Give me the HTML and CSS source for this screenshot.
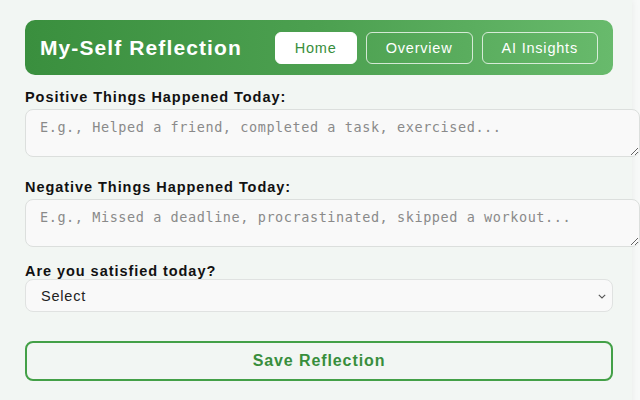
FILE: index.html
```html
<!DOCTYPE html>
<html>
<head>
<meta charset="utf-8">
<link rel="stylesheet" href="styles.css">
</head>
<body>
<div class="app">
  <header class="header">
    <h1 class="title">My-Self Reflection</h1>
    <nav class="nav">
      <button class="nav-btn active">Home</button>
      <button class="nav-btn">Overview</button>
      <button class="nav-btn">AI Insights</button>
    </nav>
  </header>
  <form class="form">
    <label class="label">Positive Things Happened Today:</label>
    <textarea class="area" placeholder="E.g., Helped a friend, completed a task, exercised..."></textarea>
    <label class="label label-gap">Negative Things Happened Today:</label>
    <textarea class="area" placeholder="E.g., Missed a deadline, procrastinated, skipped a workout..."></textarea>
    <label class="label label-gap2">Are you satisfied today?</label>
    <div class="select">
      <span>Select</span>
      <svg class="chev" width="8" height="5" viewBox="0 0 8 5"><path d="M0.8 0.8 L4 4 L7.2 0.8" fill="none" stroke="#555" stroke-width="1.1"/></svg>
    </div>
    <button type="button" class="save">Save Reflection</button>
  </form>
</div>
</body>
</html>
```
FILE: styles.css
```css
* { box-sizing: border-box; }
html, body { margin: 0; padding: 0; }
body {
  background: #f7f9f8;
  font-family: "Liberation Sans", Arial, sans-serif;
  width: 640px;
  height: 400px;
  overflow: hidden;
}
.app {
  width: 632px;
  min-height: 420px;
  background: #f2f6f3;
  border-radius: 0 0 14px 0;
  box-shadow: 1px 0 6px rgba(0,0,0,0.05);
  padding: 20px 19px 0 25px;
}
.header {
  height: 55px;
  border-radius: 10px;
  background: linear-gradient(90deg, #3a8f3e 0%, #4ca050 50%, #68ba6c 100%);
  display: flex;
  align-items: center;
  justify-content: space-between;
  padding: 0 15px;
}
.title {
  margin: 0;
  color: #fff;
  font-size: 21px;
  letter-spacing: 1.1px;
  font-weight: bold;
}
.nav { display: flex; gap: 9px; }
.nav-btn {
  height: 32px;
  font-family: "Liberation Sans", Arial, sans-serif;
  font-size: 14.5px;
  letter-spacing: 0.8px;
  color: #fff;
  background: transparent;
  border: 1.5px solid rgba(255,255,255,0.75);
  border-radius: 6px;
  padding: 0 19px;
}
.nav-btn.active {
  background: #fff;
  color: #388e3c;
  border-color: #fff;
  width: 82px;
  padding: 0;
}
.form { display: flex; flex-direction: column; }
.label {
  font-size: 14.5px;
  letter-spacing: 0.95px;
  font-weight: bold;
  color: #111;
  margin-top: 14px;
  line-height: 16px;
  margin-bottom: 4px;
}
.label-gap { margin-top: 22px; }
.label-gap2 { margin-top: 16px; margin-bottom: 0; }
.area {
  width: 615px;
  height: 48px;
  font-family: "DejaVu Sans Mono", monospace;
  font-size: 13.5px;
  letter-spacing: 0.58px;
  padding: 9px 14px 10px;
  border: 1px solid #dcdfdd;
  border-radius: 8px;
  background: #f9f9f9;
  resize: vertical;
  line-height: 16px;
}
.area::placeholder { color: #8a8a8a; }
.select {
  height: 33px;
  border: 1px solid #e0e2e1;
  border-radius: 8px;
  background: #f9f9f9;
  display: flex;
  align-items: center;
  justify-content: space-between;
  padding: 0 6px 0 15px;
  font-size: 14.5px;
  letter-spacing: 0.8px;
  color: #222;
}
.chev { margin-top: 1px; }
.save {
  margin-top: 29px;
  height: 40px;
  border: 2px solid #43a047;
  border-radius: 8px;
  background: transparent;
  color: #388e3c;
  font-family: "Liberation Sans", Arial, sans-serif;
  font-size: 16px;
  letter-spacing: 0.9px;
  font-weight: bold;
}
```
